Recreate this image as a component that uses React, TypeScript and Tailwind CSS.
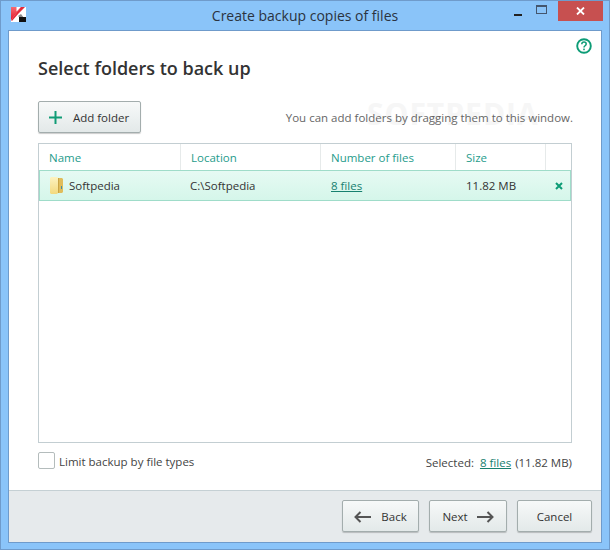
import React from 'react';

const font = { fontFamily: '"Open Sans", "Noto Sans", sans-serif' };

const KasperskyLogo = () => (
  <svg width="15" height="15" viewBox="0 0 15 15" className="block">
    <defs>
      <linearGradient id="kred" x1="0" y1="0" x2="0" y2="1">
        <stop offset="0" stopColor="#f86a72" />
        <stop offset="1" stopColor="#e0182c" />
      </linearGradient>
    </defs>
    <path d="M0 0h15v15H0z" fill="#fff" />
    <path d="M0 0h5.5v4.5L10 0h.5L0 13z" fill="url(#kred)" />
    <path d="M10 0h4L7.5 6.5 1 14 0 13z" fill="#e42a3a" />
    <path d="M7 9l3-2 3 4H9z" fill="#8a8a8a" />
    <rect x="8" y="10" width="7" height="5" fill="#111" />
  </svg>
);

const ActionButton: React.FC<{ className?: string; children: React.ReactNode }> = ({ className = '', children }) => (
  <button className={`h-[32px] pt-[2px] flex items-center justify-center rounded-[2px] border border-[#a3adad] bg-gradient-to-b from-[#f7f9f9] to-[#e3e9e9] shadow-[0_1px_1px_rgba(0,0,0,0.2)] text-[11.5px] text-[#333] ${className}`}>
    {children}
  </button>
);

const ArrowLeft = () => (
  <svg width="17" height="12" viewBox="0 0 17 12">
    <path d="M1 6h16M6.5 1 1.5 6l5 5" fill="none" stroke="#555" strokeWidth="2" />
  </svg>
);

const ArrowRight = () => (
  <svg width="17" height="12" viewBox="0 0 17 12">
    <path d="M0 6h16M10.5 1l5 5-5 5" fill="none" stroke="#555" strokeWidth="2" />
  </svg>
);

const FolderIcon = () => (
  <svg width="13" height="17" viewBox="0 0 13 17" className="block">
    <defs>
      <linearGradient id="fl" x1="0" y1="0" x2="0" y2="1">
        <stop offset="0" stopColor="#fdf3c0" />
        <stop offset="1" stopColor="#f3d97e" />
      </linearGradient>
    </defs>
    <path d="M7 1h5l1 1v13l-1 1H7z" fill="#e0bd5c" />
    <path d="M0 1l1-1h6l1 1v15l-1 1H1l-1-1z" fill="url(#fl)" />
    <path d="M8 1h1v15H8z" fill="#c9a445" />
    <rect x="11" y="9" width="1" height="3" fill="#3f8fa8" />
  </svg>
);

const Header: React.FC<{ w: string; label: string; last?: boolean }> = ({ w, label, last }) => (
  <div className={`${w} h-full flex items-center pl-[10px] pt-[2px] ${last ? '' : 'border-r border-[#e6eaea]'}`}>
    {label}
  </div>
);

export default function App() {
  return (
    <div style={font} className="w-[610px] h-[550px] flex flex-col overflow-hidden bg-[#8ac4f9] border border-[#6f9bcb]">
      {/* title bar */}
      <div className="relative h-[29px] shrink-0 flex items-center justify-center">
        <div className="absolute left-[10px] top-[6px]">
          <KasperskyLogo />
        </div>
        <span className="text-[14px] text-[#2a3340]">Create backup copies of files</span>
        <div className="absolute right-[6px] top-0 flex items-start">
          <div className="w-[27px] h-[20px] flex items-center justify-center">
            <div className="w-[8px] h-[2px] bg-[#222] mt-[7px] -ml-[2px]" />
          </div>
          <div className="w-[18px] h-[20px] flex items-center justify-center mr-[8px]">
            <div className="w-[11px] h-[9px] border border-[#44566e] border-t-2 -mt-[3px]" />
          </div>
          <div className="w-[45px] h-[20px] bg-[#c75050] flex items-center justify-center">
            <svg width="9" height="8" viewBox="0 0 9 8">
              <path d="M1 .5 8 7.5M8 .5 1 7.5" stroke="#fff" strokeWidth="1.8" fill="none" />
            </svg>
          </div>
        </div>
      </div>

      {/* window body */}
      <div className="mx-[7px] h-[513px] shrink-0 bg-white border border-[#6f9bcb] flex flex-col">
        <div className="relative flex-1 min-h-0 flex flex-col pl-[29px] pr-[29px]">
          <svg width="16" height="16" viewBox="0 0 16 16" className="absolute right-[9px] top-[7px]">
            <circle cx="8" cy="8" r="6.8" fill="none" stroke="#0d9c76" strokeWidth="1.9" />
            <path d="M5.8 6.3c0-1.4 1-2.2 2.2-2.2s2.2.8 2.2 2c0 1.6-2.2 1.7-2.2 3.3" fill="none" stroke="#0d9c76" strokeWidth="1.5" />
            <rect x="7.2" y="10.6" width="1.6" height="1.6" fill="#0d9c76" />
          </svg>

          <span className="absolute left-[358px] top-[68px] text-[30px] font-bold tracking-[1px] text-[#f6f6f6] leading-none select-none">
            SOFTPEDIA
          </span>

          <h1 className="relative mt-[25px] h-[25px] text-[18px] leading-[25px] font-semibold text-[#333]">
            Select folders to back up
          </h1>

          <div className="relative mt-[20px] flex items-center justify-between">
            <ActionButton className="w-[103px] gap-[10px] pr-[2px]">
              <svg width="15" height="15" viewBox="0 0 15 15" className="-mt-[1px]">
                <path d="M7.5 1v13M1 7.5h13" stroke="#109c76" strokeWidth="2" fill="none" />
              </svg>
              Add folder
            </ActionButton>
            <span className="text-[11.5px] text-[#666] -mr-[1px] pt-[2px]">You can add folders by dragging them to this window.</span>
          </div>

          {/* file list */}
          <div className="relative mt-[10px] h-[300px] border border-[#c3ced2] flex flex-col">
            <div className="h-[26px] shrink-0 flex items-center text-[11.5px] text-[#1f9c8c]">
              <Header w="w-[142px]" label="Name" />
              <Header w="w-[140px]" label="Location" />
              <Header w="w-[135px]" label="Number of files" />
              <Header w="w-[90px]" label="Size" />
              <Header w="flex-1" label="" last />
            </div>
            <div className="h-[31px] shrink-0 flex items-center text-[11.5px] text-[#333] border border-[#9fdcc9] bg-gradient-to-b from-[#e6faf3] to-[#d5f6ea]">
              <div className="w-[141px] flex items-center pl-[10px] gap-[6px]">
                <FolderIcon />
                <span>Softpedia</span>
              </div>
              <div className="w-[140px] pl-[9px]">C:\Softpedia</div>
              <div className="w-[135px] pl-[10px]">
                <span className="text-[#17806f] underline">8 files</span>
              </div>
              <div className="w-[90px] pl-[10px]">11.82 MB</div>
              <div className="flex-1 flex justify-center pl-[1px]">
                <svg width="8" height="8" viewBox="0 0 8 8">
                  <path d="M1 1l6 6M7 1 1 7" stroke="#0d9c76" strokeWidth="2" fill="none" />
                </svg>
              </div>
            </div>
          </div>

          <div className="relative mt-[9px] flex items-start justify-between text-[11.5px] leading-[17px] text-[#444]">
            <label className="flex items-start gap-[4px]">
              <span className="w-[17px] h-[17px] rounded-[2px] border border-[#b4bcbc] bg-white" />
              <span className="pt-[1px]">Limit backup by file types</span>
            </label>
            <div className="flex items-center pt-[2px]">
              <span>Selected:</span>
              <span className="ml-[6px] text-[#17806f] underline">8 files</span>
              <span className="ml-[4px]">(11.82 MB)</span>
            </div>
          </div>
        </div>

        {/* footer */}
        <div className="h-[52px] shrink-0 bg-[#e6eaec] border-t border-[#c5d0d4] flex items-start justify-end gap-[10px] pr-[9px] pt-[9px]">
          <ActionButton className="w-[77px] gap-[10px]">
            <ArrowLeft />
            Back
          </ActionButton>
          <ActionButton className="w-[78px] gap-[9px]">
            Next
            <ArrowRight />
          </ActionButton>
          <ActionButton className="w-[75px]">Cancel</ActionButton>
        </div>
      </div>
    </div>
  );
}
